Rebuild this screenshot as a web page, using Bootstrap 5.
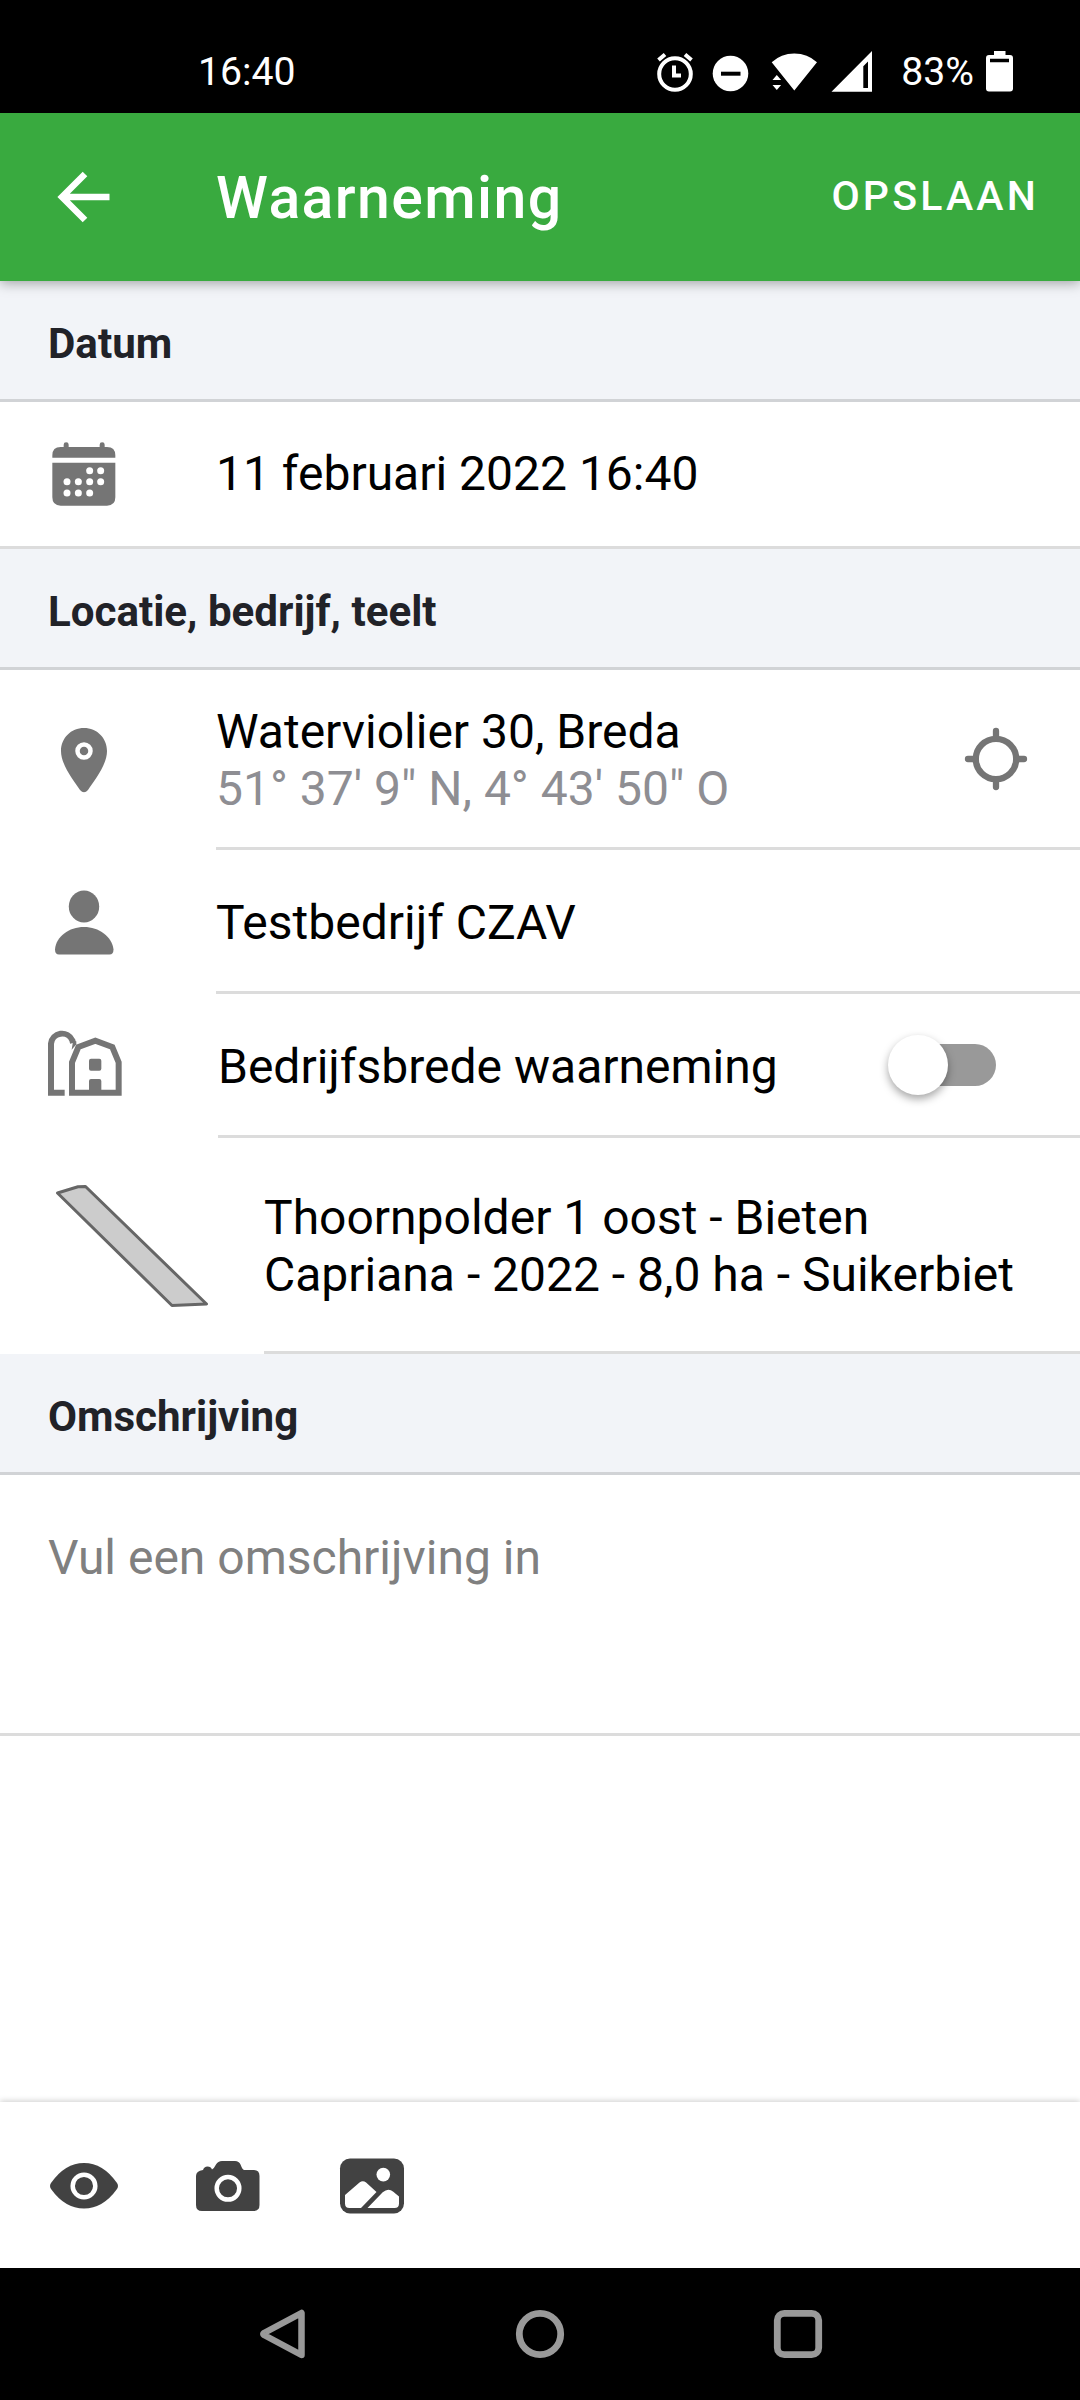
<!DOCTYPE html>
<html lang="nl">
<head>
<meta charset="utf-8">
<meta name="viewport" content="width=device-width, initial-scale=1">
<title>Waarneming</title>
<link href="https://cdn.jsdelivr.net/npm/bootstrap@5.3.0/dist/css/bootstrap.min.css" rel="stylesheet">
<style>
body{font-family:Roboto,"Liberation Sans",sans-serif;font-size:48px;line-height:57px;color:#000;background:#fff}
svg{display:block;flex:none}
.phone{width:1080px;height:2400px;overflow:hidden}
.statusbar{height:113px;padding:29px 67px 0 198px;font-size:39.2px;line-height:86px}
.status-icons{margin-top:12px}
.battery-level{margin-left:11px}
.battery-icon{margin:21px 0 0 12px}
.topbar{height:168px;background:#39aa3f;box-shadow:0 2px 12px rgba(0,0,0,.35);z-index:1;padding-right:44px}
.topbar h1{font-size:59px;font-weight:500;letter-spacing:1.4px;line-height:66px;padding-top:2px}
.save{font-size:41px;font-weight:500;letter-spacing:3.2px;line-height:48px;margin-right:-3px;padding-bottom:3px}
.section-head{height:121px;padding:8px 48px 0;background:#f2f4f8;border-bottom:3px solid #d1d3d6;font-size:42.1px;font-weight:700;color:#212228}
.line-row{border-bottom:3px solid #dcdcdc}
.leading{width:216px;padding-left:39px}
.leading-toggle{width:218px}
.leading-field{width:264px;padding-left:48px}
.coords{color:#8e8e93}
.note{height:261px;padding:54px 48px 0;color:#808080}
.bottombar{height:166px;box-shadow:0 -1px 6px rgba(0,0,0,.2);padding:0 39px;gap:54px}
.navbar-sys{height:132px;gap:208px}
.txt{padding-top:3px}
.date-txt{padding-bottom:2px}
.locate{margin-right:39px}
.toggle{margin-right:84px}
.toggle circle{filter:drop-shadow(0 4px 4px rgba(0,0,0,.35))}
.row-date{height:147px}
.row-place{height:180px}
.row-single{height:144px}
.row-field{height:216px}
</style>
</head>
<body>
<div class="phone d-flex flex-column">
  <div class="statusbar bg-black text-white d-flex">
    <span>16:40</span>
    <svg class="status-icons ms-auto" width="240" height="60" viewBox="650 41 240 60" fill="#fff">
      <circle cx="675" cy="74" r="15.8" fill="none" stroke="#fff" stroke-width="4"/>
      <path d="M658.5 60l6.500-5.500M691.500 60l-6.500-5.500M674 65.500v10h7" fill="none" stroke="#fff" stroke-width="4"/>
      <circle cx="730.500" cy="73.500" r="17.800"/><path d="M721 73.700h19.500" stroke="#000" stroke-width="4"/>
      <path d="M794.300 90.500L771.700 62.300Q781 53.500 794.300 53.500T817 62.300zM772.500 80l4.300-5 4.300 5zM772.500 85l4.300 5 4.300-5z"/>
      <path fill-rule="evenodd" d="M831.500 91.700L872 51v40.700zM863.300 88h4.700V61.500l-4.700 4.700z"/>
    </svg>
    <span class="battery-level">83%</span>
    <svg class="battery-icon" width="27" height="42" viewBox="986 50 27 42" fill="#fff"><path fill-rule="evenodd" d="M994 51h11.500v4h4.500q3 0 3 3v30.500q0 3-3 3h-21q-3 0-3-3V58q0-3 3-3h5zM990 58.700v3.600h19v-3.600z"/></svg>
  </div>
  <header class="topbar text-white d-flex align-items-center position-relative">
    <div class="leading"><svg width="90" height="90" viewBox="39 152 90 90" fill="none" stroke="#fff" stroke-width="6.500"><path d="M85 174L62 197l23 23M62 197h47.500"/></svg></div>
    <h1 class="m-0">Waarneming</h1>
    <span class="save ms-auto">OPSLAAN</span>
  </header>
  <h2 class="section-head m-0 d-flex align-items-center">Datum</h2>
  <div class="line-row row-date d-flex align-items-center">
    <div class="leading"><svg width="90" height="90" viewBox="-3 -3 270 270" fill="#757575"><path d="M37 83V76q0-25 25-25h9v-7q0-7 7.500-7t7.500 7v7h93v-7q0-7 7.500-7t7.500 7v7h7q25 0 25 25v7zM37 98h189v104q0 25-25 25H62q-25 0-25-25z"/><g fill="#fff"><circle cx="149" cy="122" r="10.500"/><circle cx="182" cy="122" r="10.500"/><circle cx="81" cy="155" r="10.500"/><circle cx="115" cy="155" r="10.500"/><circle cx="149" cy="155" r="10.500"/><circle cx="182" cy="155" r="10.500"/><circle cx="81" cy="189" r="10.500"/><circle cx="115" cy="189" r="10.500"/><circle cx="149" cy="189" r="10.500"/></g></svg></div>
    <span class="date-txt">11 februari 2022 16:40</span>
  </div>
  <h2 class="section-head m-0 d-flex align-items-center">Locatie, bedrijf, teelt</h2>
  <div class="row-place d-flex">
    <div class="leading d-flex align-items-center"><svg width="90" height="90" viewBox="39 715 90 90" fill="#757575"><path d="M84 728c13 0 23 10 23 23 0 14-13 30-19 39q-4 4.500-8 0c-6-9-19-25-19-39 0-13 10-23 23-23z"/><circle cx="84" cy="751" r="6.500" fill="none" stroke="#fff" stroke-width="4.500"/></svg></div>
    <div class="line-row flex-grow-1 d-flex align-items-center">
      <div class="txt"><div>Waterviolier 30, Breda</div><div class="coords">51° 37' 9" N, 4° 43' 50" O</div></div>
      <svg class="locate ms-auto" width="90" height="90" viewBox="951 714 90 90" fill="none" stroke="#757575" stroke-width="6.300" stroke-linecap="round"><circle cx="996" cy="759" r="20.200"/><path d="M996 731v6M996 781v6M968 759h6M1018 759h6"/></svg>
    </div>
  </div>
  <div class="row-single d-flex">
    <div class="leading d-flex align-items-center"><svg width="90" height="90" viewBox="39 876.500 90 90" fill="#757575"><ellipse cx="84" cy="906" rx="15.200" ry="16"/><path d="M55 949c1-13 14-22.500 29-22.500s28 9.500 29.500 22.500q0 5-4 5H59q-4 0-4-5z"/></svg></div>
    <div class="line-row flex-grow-1 d-flex align-items-center"><span class="txt">Testbedrijf CZAV</span></div>
  </div>
  <div class="row-single d-flex">
    <div class="leading leading-toggle d-flex align-items-center"><svg width="90" height="90" viewBox="-3 4 270 270" fill="none" stroke="#757575" stroke-width="18"><path d="M74 219H33V72a33.500 33.500 0 0 1 64-10L99 70M96 219v-91l19-46 51-19 51 19 19 46v91z"/><path d="M95 90l14-16v-9H99z" fill="#757575" stroke="none"/><path d="M153 117h25q6 0 6 6v24q0 6-6 6h-25q-6 0-6-6v-24q0-6 6-6zM153 178h25q6 0 6 6v36h-37v-36q0-6 6-6z" fill="#757575" stroke="none"/></svg></div>
    <div class="line-row flex-grow-1 d-flex align-items-center"><span class="txt">Bedrijfsbrede waarneming</span>
      <svg class="toggle ms-auto overflow-visible" width="108" height="60" viewBox="888 1035 108 60"><rect x="908" y="1044" width="88" height="42" rx="21" fill="#999"/><circle cx="918" cy="1065" r="30" fill="#fff"/></svg>
    </div>
  </div>
  <div class="row-field d-flex">
    <div class="leading-field d-flex align-items-center"><svg width="170" height="140" viewBox="48 1176 170 140"><path d="M57.500 1193L78 1186.800 85.500 1186.500 206.500 1304 172 1305.500z" fill="#ccc" stroke="#666" stroke-width="3" stroke-linejoin="round"/></svg></div>
    <div class="line-row flex-grow-1 d-flex align-items-center"><div class="txt">Thoornpolder 1 oost - Bieten<br>Capriana - 2022 - 8,0 ha - Suikerbiet</div></div>
  </div>
  <h2 class="section-head m-0 d-flex align-items-center">Omschrijving</h2>
  <div class="line-row note">Vul een omschrijving in</div>
  <div class="flex-grow-1"></div>
  <div class="bottombar bg-white d-flex align-items-center">
    <svg width="90" height="90" viewBox="39 2140 90 90" fill="#424242"><path d="M51 2183Q65 2163 84 2163t33 20q2 3 0 6-14 19.500-33 19.500T51 2189q-2-3 0-6z"/><circle cx="84" cy="2186" r="11.300" fill="none" stroke="#fff" stroke-width="4.500"/></svg>
    <svg width="90" height="90" viewBox="183 2140 90 90" fill="#424242"><path d="M203 2170q1-3.500 4.500-3.500t4.500 3q2-1 4-5 2-3.500 6-3.500h13q4 0 5.500 3.500 2 5.500 4 5.500h9q6 0 6 6v29q0 6-6 6h-51.500q-6 0-6-6v-29q0-5 7-6z"/><circle cx="228" cy="2188.300" r="11.300" fill="none" stroke="#fff" stroke-width="4.500"/></svg>
    <svg width="90" height="90" viewBox="327 2140 90 90"><rect x="340" y="2158.500" width="64" height="55" rx="10" fill="#424242"/><g fill="#fff"><circle cx="383.300" cy="2174.600" r="6.800"/><path d="M345 2195l14.500-12.500q3.300-2.500 6.600 0L376.500 2192 361 2208h-11.500q-4.500 0-4.500-4.500zM367.500 2208l15.200-15.700q5.600-5 10.600-.5l5.700 4.700v7q0 4.500-4.500 4.500z"/></g></svg>
  </div>
  <nav class="navbar-sys bg-black d-flex justify-content-center align-items-center">
    <svg width="50" height="50" viewBox="257 2309 50 50" fill="none" stroke="#999" stroke-width="6.500" stroke-linejoin="round"><path d="M301.500 2313v42l-37.500-20q-1.500-1 0-2z"/></svg>
    <svg width="50" height="50" viewBox="515 2309 50 50" fill="none" stroke="#999" stroke-width="6.800"><circle cx="540" cy="2334" r="20.700"/></svg>
    <svg width="50" height="50" viewBox="773 2309 50 50" fill="none" stroke="#999" stroke-width="6.800"><rect x="777.300" y="2313.300" width="41.400" height="41.400" rx="7"/></svg>
  </nav>
</div>
<script src="https://cdn.jsdelivr.net/npm/bootstrap@5.3.0/dist/js/bootstrap.bundle.min.js"></script>
</body>
</html>
